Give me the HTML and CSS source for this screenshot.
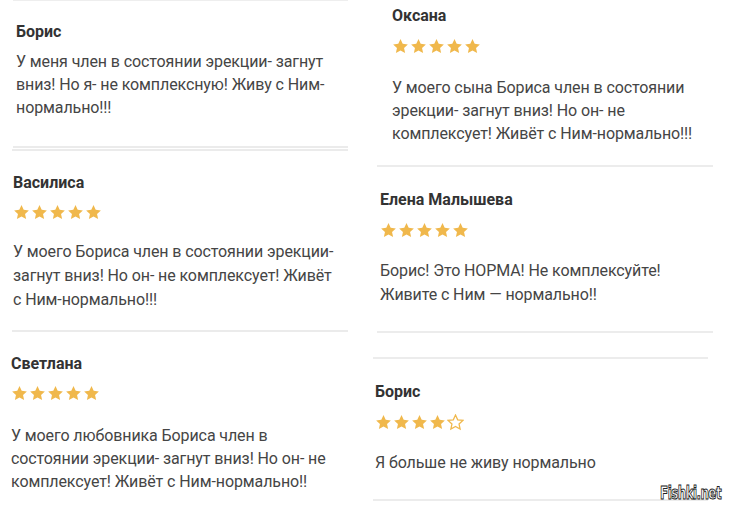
FILE: index.html
```html
<!DOCTYPE html>
<html lang="ru">
<head>
<meta charset="utf-8">
<link rel="stylesheet" href="styles.css">
</head>
<body>
<svg width="0" height="0" class="defs">
  <defs>
    <symbol id="star" viewBox="0 0 24 24"><polygon points="12,1.5 15.1,8.2 22.4,9 17,14 18.5,21.3 12,17.6 5.5,21.3 7,14 1.6,9 8.9,8.2"/></symbol>
  </defs>
</svg>
<div class="page">
  <div class="col col-left">
    <div class="review r1">
      <div class="name">Борис</div>
      <p class="text">У меня член в состоянии эрекции- загнут<br>вниз! Но я- не комплексную! Живу с Ним-<br>нормально!!!</p>
    </div>
    <div class="review r2">
      <div class="name">Василиса</div>
      <div class="stars"><svg><use href="#star"/></svg><svg><use href="#star"/></svg><svg><use href="#star"/></svg><svg><use href="#star"/></svg><svg><use href="#star"/></svg></div>
      <p class="text">У моего Бориса член в состоянии эрекции-<br>загнут вниз! Но он- не комплексует! Живёт<br>с Ним-нормально!!!</p>
    </div>
    <div class="review r3">
      <div class="name">Светлана</div>
      <div class="stars"><svg><use href="#star"/></svg><svg><use href="#star"/></svg><svg><use href="#star"/></svg><svg><use href="#star"/></svg><svg><use href="#star"/></svg></div>
      <p class="text">У моего любовника Бориса член в<br>состоянии эрекции- загнут вниз! Но он- не<br>комплексует! Живёт с Ним-нормально!!</p>
    </div>
  </div>
  <div class="col col-right">
    <div class="review q1">
      <div class="name">Оксана</div>
      <div class="stars"><svg><use href="#star"/></svg><svg><use href="#star"/></svg><svg><use href="#star"/></svg><svg><use href="#star"/></svg><svg><use href="#star"/></svg></div>
      <p class="text">У моего сына Бориса член в состоянии<br>эрекции- загнут вниз! Но он- не<br>комплексует! Живёт с Ним-нормально!!!</p>
    </div>
    <div class="review q2">
      <div class="name">Елена Малышева</div>
      <div class="stars"><svg><use href="#star"/></svg><svg><use href="#star"/></svg><svg><use href="#star"/></svg><svg><use href="#star"/></svg><svg><use href="#star"/></svg></div>
      <p class="text">Борис! Это НОРМА! Не комплексуйте!<br>Живите с Ним — нормально!!</p>
    </div>
    <div class="review q3">
      <div class="name">Борис</div>
      <div class="stars"><svg><use href="#star"/></svg><svg><use href="#star"/></svg><svg><use href="#star"/></svg><svg><use href="#star"/></svg><svg class="empty"><use href="#star"/></svg></div>
      <p class="text">Я больше не живу нормально</p>
    </div>
  </div>
  <div class="watermark">Fishki.net</div>
</div>
</body>
</html>
```
FILE: styles.css
```css
* { box-sizing: border-box; }
html, body { margin: 0; padding: 0; background: #fff; }
.defs { position: absolute; width: 0; height: 0; }
.page {
  position: relative;
  width: 730px;
  height: 509px;
  overflow: hidden;
  display: flex;
  font-family: "Roboto", "Open Sans", sans-serif;
  color: #3d3d3d;
}
.col { display: flex; flex-direction: column; }
.col-left { width: 360px; }
.col-right { width: 370px; }
.review { display: flex; flex-direction: column; }
.name {
  font-weight: 700;
  font-size: 16px;
  line-height: 22px;
  color: #333;
}
.text {
  margin: 0;
  font-size: 16px;
  line-height: 23px;
  color: #454545;
  letter-spacing: -0.1px;
}
.stars { display: flex; gap: 1px; height: 17px; }
.stars svg { width: 17px; height: 17px; fill: #f0b84c; }
.stars svg.empty { fill: #fff; stroke: #f0b84c; stroke-width: 1.8px; }

/* left column */
.r1 { margin-left: 13px; width: 335px; padding: 20px 0 27px 3px; border-top: 1px solid #eee; border-bottom: 2px solid #ebebeb; }
.r1 .name { margin-bottom: 7px; }
.r2 { margin-left: 12px; width: 336px; margin-top: 1px; padding: 21px 0 18px 1px; border-top: 2px solid #ebebeb; border-bottom: 2px solid #ebebeb; }
.r2 .name { margin-bottom: 10px; }
.r2 .stars { margin-bottom: 19px; }
.r2 .text { line-height: 24px; }
.r3 { margin-left: 8px; width: 337px; padding: 21px 0 0 3px; }
.r3 .name { margin-bottom: 10px; }
.r3 .stars { margin-bottom: 22px; }

/* right column */
.q1 { margin-left: 17px; width: 336px; padding: 5px 0 20px 15px; border-bottom: 2px solid #ececec; }
.q1 .name { margin-bottom: 11px; }
.q1 .stars { margin-bottom: 21px; }
.q2 { margin-left: 17px; width: 336px; padding: 22px 0 24px 3px; border-bottom: 2px solid #ececec; }
.q2 .name { margin-bottom: 11px; }
.q2 .stars { margin-bottom: 20px; }
.q2 .text { line-height: 24px; }
.q3 { margin-left: 13px; width: 335px; margin-top: 24px; padding: 22px 0 25px 2px; border-top: 2px solid #ececec; border-bottom: 2px solid #ececec; }
.q3 .name { margin-bottom: 11px; }
.q3 .stars { margin-bottom: 20px; }

.watermark {
  position: absolute;
  right: 9px;
  bottom: 6px;
  font-family: "DejaVu Sans", sans-serif;
  font-weight: 700;
  font-size: 17px;
  letter-spacing: -0.8px;
  color: #fff;
  -webkit-text-stroke: 1px #222;
  transform: scaleX(0.7);
  transform-origin: right center;
}
```
